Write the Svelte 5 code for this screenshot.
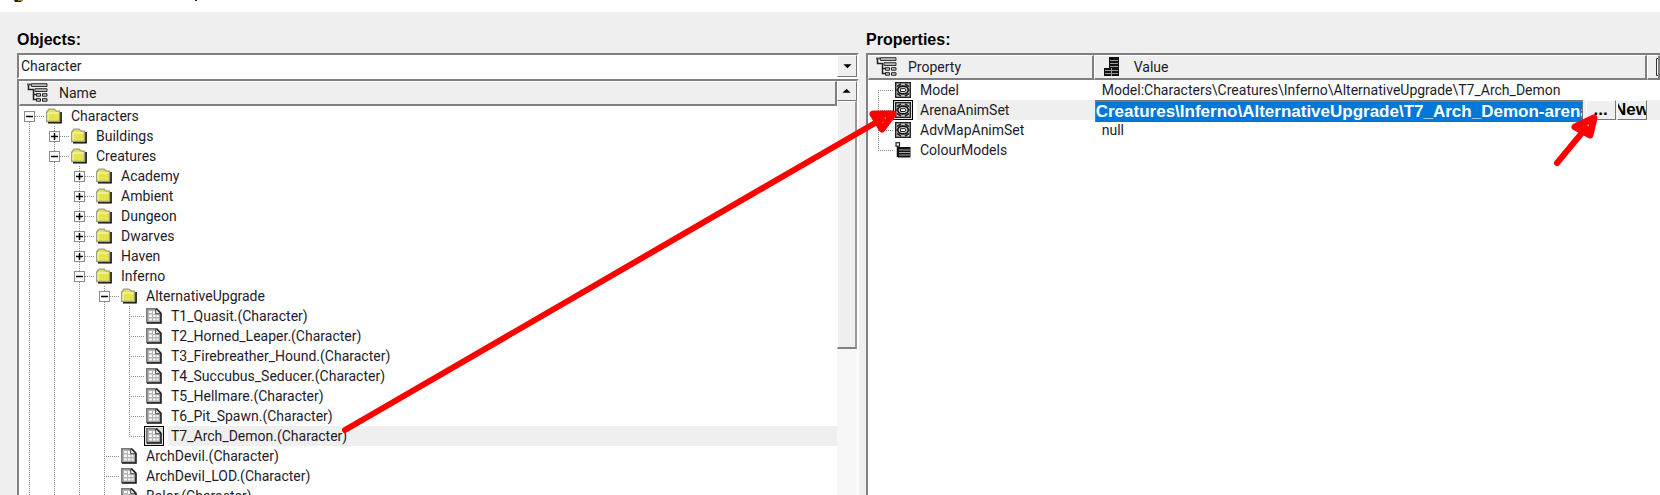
<script>
  const toggles = $state({
    Characters: true,
    Buildings: false,
    Creatures: true,
    Academy: false,
    Ambient: false,
    Dungeon: false,
    Dwarves: false,
    Haven: false,
    Inferno: true,
    AlternativeUpgrade: true
  })

  const nodes = [
    { name: 'Characters', depth: 0, folder: true, first: true },
    { name: 'Buildings', depth: 1, folder: true },
    { name: 'Creatures', depth: 1, folder: true },
    { name: 'Academy', depth: 2, folder: true },
    { name: 'Ambient', depth: 2, folder: true },
    { name: 'Dungeon', depth: 2, folder: true },
    { name: 'Dwarves', depth: 2, folder: true },
    { name: 'Haven', depth: 2, folder: true },
    { name: 'Inferno', depth: 2, folder: true },
    { name: 'AlternativeUpgrade', depth: 3, folder: true },
    { name: 'T1_Quasit.(Character)', depth: 4 },
    { name: 'T2_Horned_Leaper.(Character)', depth: 4 },
    { name: 'T3_Firebreather_Hound.(Character)', depth: 4 },
    { name: 'T4_Succubus_Seducer.(Character)', depth: 4 },
    { name: 'T5_Hellmare.(Character)', depth: 4 },
    { name: 'T6_Pit_Spawn.(Character)', depth: 4 },
    { name: 'T7_Arch_Demon.(Character)', depth: 4, last: true },
    { name: 'ArchDevil.(Character)', depth: 3 },
    { name: 'ArchDevil_LOD.(Character)', depth: 3 },
    { name: 'Balor.(Character)', depth: 3 }
  ]

  const properties = [
    { name: 'Model', value: 'Model:Characters\\Creatures\\Inferno\\AlternativeUpgrade\\T7_Arch_Demon', first: true },
    { name: 'ArenaAnimSet', edit: true },
    { name: 'AdvMapAnimSet', value: 'null' },
    { name: 'ColourModels', value: '', list: true, last: true }
  ]

  let selected = $state('T7_Arch_Demon.(Character)')
  let path = $state('Creatures\\Inferno\\AlternativeUpgrade\\T7_Arch_Demon-arena')

  // a closed folder hides everything below it that is deeper
  let visible = $derived.by(() => {
    const out = []
    let closedAt = Infinity
    for (const node of nodes) {
      if (node.depth > closedAt) continue
      closedAt = node.folder && !toggles[node.name] ? node.depth : Infinity
      out.push(node)
    }
    return out
  })
</script>

{#snippet guide(kind, first, last)}
  <svg class="guide" viewBox="0 0 25 20" aria-hidden="true">
    <path
      d={first ? 'M10.5 10V20' : last ? 'M10.5 0V11' : 'M10.5 0V20'}
      class="dots"
    />
    {#if kind !== 'line'}
      <path d="M12 10.5H25" class="dots" />
    {/if}
    {#if kind === 'open' || kind === 'closed'}
      <rect x="5.5" y="5.5" width="10" height="10" fill="#fff" stroke="#8c8c8c" />
      <path d="M7 10.5h7" stroke="#000" stroke-width="1.5" />
      {#if kind === 'closed'}
        <path d="M10.5 7v7" stroke="#000" stroke-width="1.5" />
      {/if}
    {/if}
  </svg>
{/snippet}

{#snippet folderIcon()}
  <svg class="icon" viewBox="0 0 16 16" aria-hidden="true">
    <path d="M2 14.700H15V4" fill="none" stroke="#000" stroke-width="1.6" />
    <path d="M.7 13.500V4L3 1.200h5L10.500 3.200H13.500V13.500z" fill="#e6e34c" stroke="#9c9c86" stroke-width="1.300" />
    <path d="M2 12.500V5h10.500" fill="none" stroke="#fbfbc8" />
  </svg>
{/snippet}

{#snippet fileIcon()}
  <svg class="icon" viewBox="0 0 16 16" aria-hidden="true">
    <path d="M.8 .8h9.700l4 4v9.700H.8z" fill="#b4b4b4" stroke="#77777b" stroke-width="1.500" />
    <path d="M3 3h3v2H3zM7 3h2v3H7zM3 6.500h3v2.500H3zM7 7h2.500v2H7zM10.500 7h2v2h-2zM3 10.500h3v2H3zM7 10.500h2.500v2H7zM10.500 10.500h2v2h-2z" fill="#f6f6f6" />
    <path d="M9.700 1v4.700h4.500" fill="#eee" stroke="#444" />
    <path d="M10.500 .8l4.500 4.500V15H1" fill="none" stroke="#1c1c1c" stroke-width="1.500" />
  </svg>
{/snippet}

{#snippet linkIcon()}
  <svg class="icon" viewBox="0 0 16 16" aria-hidden="true">
    <rect x=".7" y=".7" width="14.600" height="14.600" fill="#ccc" stroke="#222" stroke-width="1.400" />
    <path d="M2 4.500l4-2.500M14 4.500l-4-2.500M2 11.500l4 2.500M14 11.500l-4 2.500" stroke="#222" stroke-width="1.500" />
    <ellipse cx="8" cy="8" rx="5.300" ry="3.900" fill="#d0d0d0" stroke="#111" stroke-width="1.600" />
    <path d="M5.500 6.700h4.500l1 1.300-1 1.500H5.500z" fill="#fff" stroke="#222" />
    <path d="M1 8h2M13 8h2" stroke="#222" />
  </svg>
{/snippet}

{#snippet listIcon()}
  <svg class="icon" viewBox="0 0 16 16" aria-hidden="true">
    <rect x="1" y=".7" width="3.500" height="3.500" fill="#fff" stroke="#222" stroke-width="1.200" />
    <path d="M2.500 4.500V15" stroke="#111" stroke-width="1.500" />
    <path d="M3 5h12.500v10.500H3z" fill="#111" />
    <path d="M4 8h11M4 10.500h11M4 13h11" stroke="#aaa" />
  </svg>
{/snippet}

{#snippet treeIcon()}
  <svg class="head-icon" viewBox="0 0 21 20" aria-hidden="true">
    <path d="M1.500 1v5.500H7M6.500 6v10.500H12M6.500 11.500H12" fill="none" stroke="#222" stroke-width="1.500" />
    <path d="M0 .5h4v2H0z" fill="#555" />
    <path d="M4.500 .7H20v2.800H4.500zM8 5.700h12v2.800H8z" fill="#b8b8b8" stroke="#333" />
    <path d="M9.500 10.700h4v2.500h-4zM15.500 10.700H20v2.500h-4.500zM9.500 15.700h4v2.500h-4zM15.500 15.700H20v2.500h-4.500z" fill="#ccc" stroke="#222" />
  </svg>
{/snippet}

<div class="window">
  <div class="titlebar">
    <svg viewBox="0 0 210 12" aria-hidden="true">
      <path d="M14 0h9l-2 2h-6z" fill="#27230c" />
      <path d="M18 0h4v1h-4z" fill="#9a8420" />
      <path d="M195 0h2v1h-2z" fill="#222" />
    </svg>
  </div>

  <main>
    <section>
      <h2><label for="object-type">Objects:</label></h2>
      <div class="combo">
        <select id="object-type">
          <option>Character</option>
        </select>
        <svg class="drop" viewBox="0 0 20 20" aria-hidden="true">
          <path d="M6 8h9l-4.500 4.500z" />
        </svg>
      </div>

      <div class="pane objects">
        <div class="tree">
          <div class="head">{@render treeIcon()}<span>Name</span></div>
          {#each visible as node (node.name)}
            <div class="row">
              {#each { length: node.depth } as _}
                {@render guide('line')}
              {/each}
              {#if node.folder}
                <button
                  class="toggle"
                  aria-label="Toggle {node.name}"
                  aria-expanded={toggles[node.name]}
                  onclick={() => (toggles[node.name] = !toggles[node.name])}
                >
                  {@render guide(toggles[node.name] ? 'open' : 'closed', node.first)}
                </button>
              {:else}
                {@render guide('leaf', false, node.last)}
              {/if}
              <button class="item" class:selected={selected === node.name} onclick={() => (selected = node.name)}>
                <span class="slot">
                  {#if node.folder}{@render folderIcon()}{:else}{@render fileIcon()}{/if}
                </span>
                <span class="label">{node.name}</span>
              </button>
            </div>
          {/each}
        </div>
        <div class="scrollbar">
          <button class="up" aria-label="Scroll up">
            <svg viewBox="0 0 20 20" aria-hidden="true"><path d="M5 12h9l-4.500-4.500z" /></svg>
          </button>
          <div class="thumb"></div>
        </div>
      </div>
    </section>

    <section>
      <h2>Properties:</h2>
      <div class="pane">
        <table>
          <colgroup>
            <col class="col-name" />
            <col class="col-value" />
            <col />
          </colgroup>
          <thead>
            <tr>
              <th><div class="head">{@render treeIcon()}<span>Property</span></div></th>
              <th>
                <div class="head">
                  <svg class="head-icon" viewBox="0 0 21 20" aria-hidden="true">
                    <path d="M7 0h10v19H2V11h5z" fill="#111" />
                    <path d="M8 3.500h8M8 6.500h8M8 9.500h8M3 13.500h13M3 16.500h13" stroke="#999" />
                    <path d="M9.500 11v8" stroke="#999" />
                  </svg>
                  <span>Value</span>
                </div>
              </th>
              <th>
                <div class="head">
                  <svg class="head-icon" viewBox="0 0 21 20" aria-hidden="true">
                    <path d="M1.500 1.500h17v17h-17z" fill="#fff" stroke="#333" />
                  </svg>
                </div>
              </th>
            </tr>
          </thead>
          <tbody>
            {#each properties as prop (prop.name)}
              <tr>
                <td>
                  <div class="row">
                    {@render guide('leaf', prop.first, prop.last)}
                    <div class="item" class:selected={prop.edit}>
                      <span class="slot">
                        {#if prop.list}{@render listIcon()}{:else}{@render linkIcon()}{/if}
                      </span>
                      <span class="label">{prop.name}</span>
                    </div>
                  </div>
                </td>
                <td>
                  {#if prop.edit}
                    <div class="editor">
                      <input type="text" aria-label={prop.name} bind:value={path} />
                      <button>...</button>
                      <button><span>New</span></button>
                    </div>
                  {:else}
                    <div class="value">{prop.value}</div>
                  {/if}
                </td>
                <td class:filled={prop.edit}></td>
              </tr>
            {/each}
          </tbody>
        </table>
      </div>
    </section>
  </main>

  <svg class="arrows" viewBox="0 0 1660 495" preserveAspectRatio="none" aria-hidden="true">
    <path d="M345 430L882 119" />
    <path class="tip" d="M873 114L893 114L882 129Z" />
    <path d="M1557 163L1586 128" />
    <path class="tip" d="M1575 127L1594 118L1590 135Z" />
  </svg>
</div>

<style>
  :global(body) {
    background: #efefef;
  }

  .window {
    position: relative;
    display: flex;
    flex-direction: column;
    height: 100vh;
    overflow: hidden;
    background: #efefef;
    color: #1c1c2a;
    font: 14px/20px Roboto, "Liberation Sans", Arial, sans-serif;
  }

  .titlebar {
    height: 12px;
    background: #fff;
  }

  .titlebar svg {
    display: block;
    width: 210px;
    height: 12px;
  }

  main {
    flex: 1;
    min-height: 0;
    display: grid;
    grid-template-columns: 842fr 794fr;
    gap: 7px;
    padding-left: 17px;
  }

  section {
    display: flex;
    flex-direction: column;
    min-width: 0;
    min-height: 0;
  }

  h2 {
    margin: 0;
    padding: 18px 0 3px;
    font: bold 16px/20px "Liberation Sans", Arial, sans-serif;
    color: #000;
  }

  button {
    padding: 0;
    font: inherit;
    color: inherit;
  }

  .combo {
    display: flex;
    flex: none;
    height: 26px;
    box-sizing: border-box;
    border: 2px solid;
    border-color: #808080 #fff #fff #808080;
    background: #fff;
  }

  select {
    appearance: none;
    flex: 1;
    border: 0;
    padding: 0 2px;
    background: #fff;
    color: inherit;
    font: inherit;
  }

  .drop,
  .up {
    box-sizing: border-box;
    width: 20px;
    flex: none;
    background: #efefef;
    border: 1px solid;
    border-color: #fff #777 #777 #fff;
  }

  .pane {
    flex: 1;
    min-height: 0;
    overflow: hidden;
    background: #fff;
    border: solid #808080;
    border-width: 2px 0 0 2px;
  }

  .objects {
    display: flex;
    border-right: 2px solid #fff;
  }

  .tree {
    flex: 1;
    min-width: 0;
  }

  .head {
    display: flex;
    align-items: center;
    gap: 11px;
    height: 25px;
    box-sizing: border-box;
    padding-left: 7px;
    overflow: hidden;
    background: #efefef;
    border: solid;
    border-width: 1px 2px 2px 1px;
    border-color: #fff #808080 #808080 #fff;
  }

  .head-icon {
    width: 21px;
    height: 20px;
    flex: none;
  }

  .row {
    display: flex;
    height: 20px;
  }

  .guide {
    display: block;
    flex: none;
    width: 25px;
    height: 20px;
  }

  .dots {
    fill: none;
    stroke: #8a8a8a;
    stroke-dasharray: 1 1;
  }

  .toggle {
    border: 0;
    background: none;
  }

  .item {
    display: flex;
    flex: 1;
    min-width: 0;
    gap: 4px;
    border: 0;
    background: none;
    text-align: left;
  }

  .slot {
    box-sizing: border-box;
    display: flex;
    align-items: center;
    justify-content: center;
    width: 20px;
    height: 20px;
    flex: none;
    background: #fff;
  }

  .icon {
    width: 16px;
    height: 16px;
    flex: none;
  }

  .label {
    flex: 1;
    padding-left: 3px;
    white-space: nowrap;
  }

  .selected .slot {
    border: 1px solid #000;
    background: #dcdcdc;
  }

  .selected .label {
    background: #efefef;
  }

  .scrollbar {
    display: flex;
    flex-direction: column;
    width: 20px;
    background: #f7f7f7;
  }

  .up {
    height: 20px;
  }

  .up svg {
    display: block;
  }

  .thumb {
    box-sizing: border-box;
    height: 60%;
    background: #efefef;
    border: solid;
    border-width: 1px 2px 2px 1px;
    border-color: #fff #999 #808080 #fff;
  }

  table {
    width: 100%;
    table-layout: fixed;
    border-collapse: collapse;
  }

  .col-name {
    width: 28.5%;
  }

  .col-value {
    width: 69.8%;
  }

  th,
  td {
    padding: 0;
    font-weight: normal;
    text-align: left;
    vertical-align: top;
  }

  .value {
    padding-left: 8px;
    height: 20px;
    white-space: nowrap;
  }

  .editor {
    display: flex;
    height: 20px;
    gap: 1px;
    background: #efefef;
  }

  .editor input {
    flex: 1;
    min-width: 0;
    height: 22px;
    box-sizing: border-box;
    margin: 0 2px 0 1px;
    padding: 0;
    border: solid #777;
    border-width: 2px 1px 0 1px;
    background: #0078d7;
    color: #fff;
    font: bold 17px/20px "Liberation Sans", Arial, sans-serif;
  }

  .editor button {
    display: flex;
    justify-content: center;
    width: 30px;
    flex: none;
    box-sizing: border-box;
    overflow: hidden;
    border: 1px solid;
    border-color: #fff #777 #777 #fff;
    background: #efefef;
    color: #000;
    font: bold 17px/18px "Liberation Sans", Arial, sans-serif;
  }

  .filled {
    background: #efefef;
  }

  .arrows {
    position: absolute;
    inset: 0;
    width: 100%;
    height: 100%;
    pointer-events: none;
    fill: none;
    stroke: #f00;
    stroke-width: 6;
    stroke-linecap: round;
    stroke-linejoin: round;
  }

  .tip {
    stroke-width: 7;
  }
</style>
